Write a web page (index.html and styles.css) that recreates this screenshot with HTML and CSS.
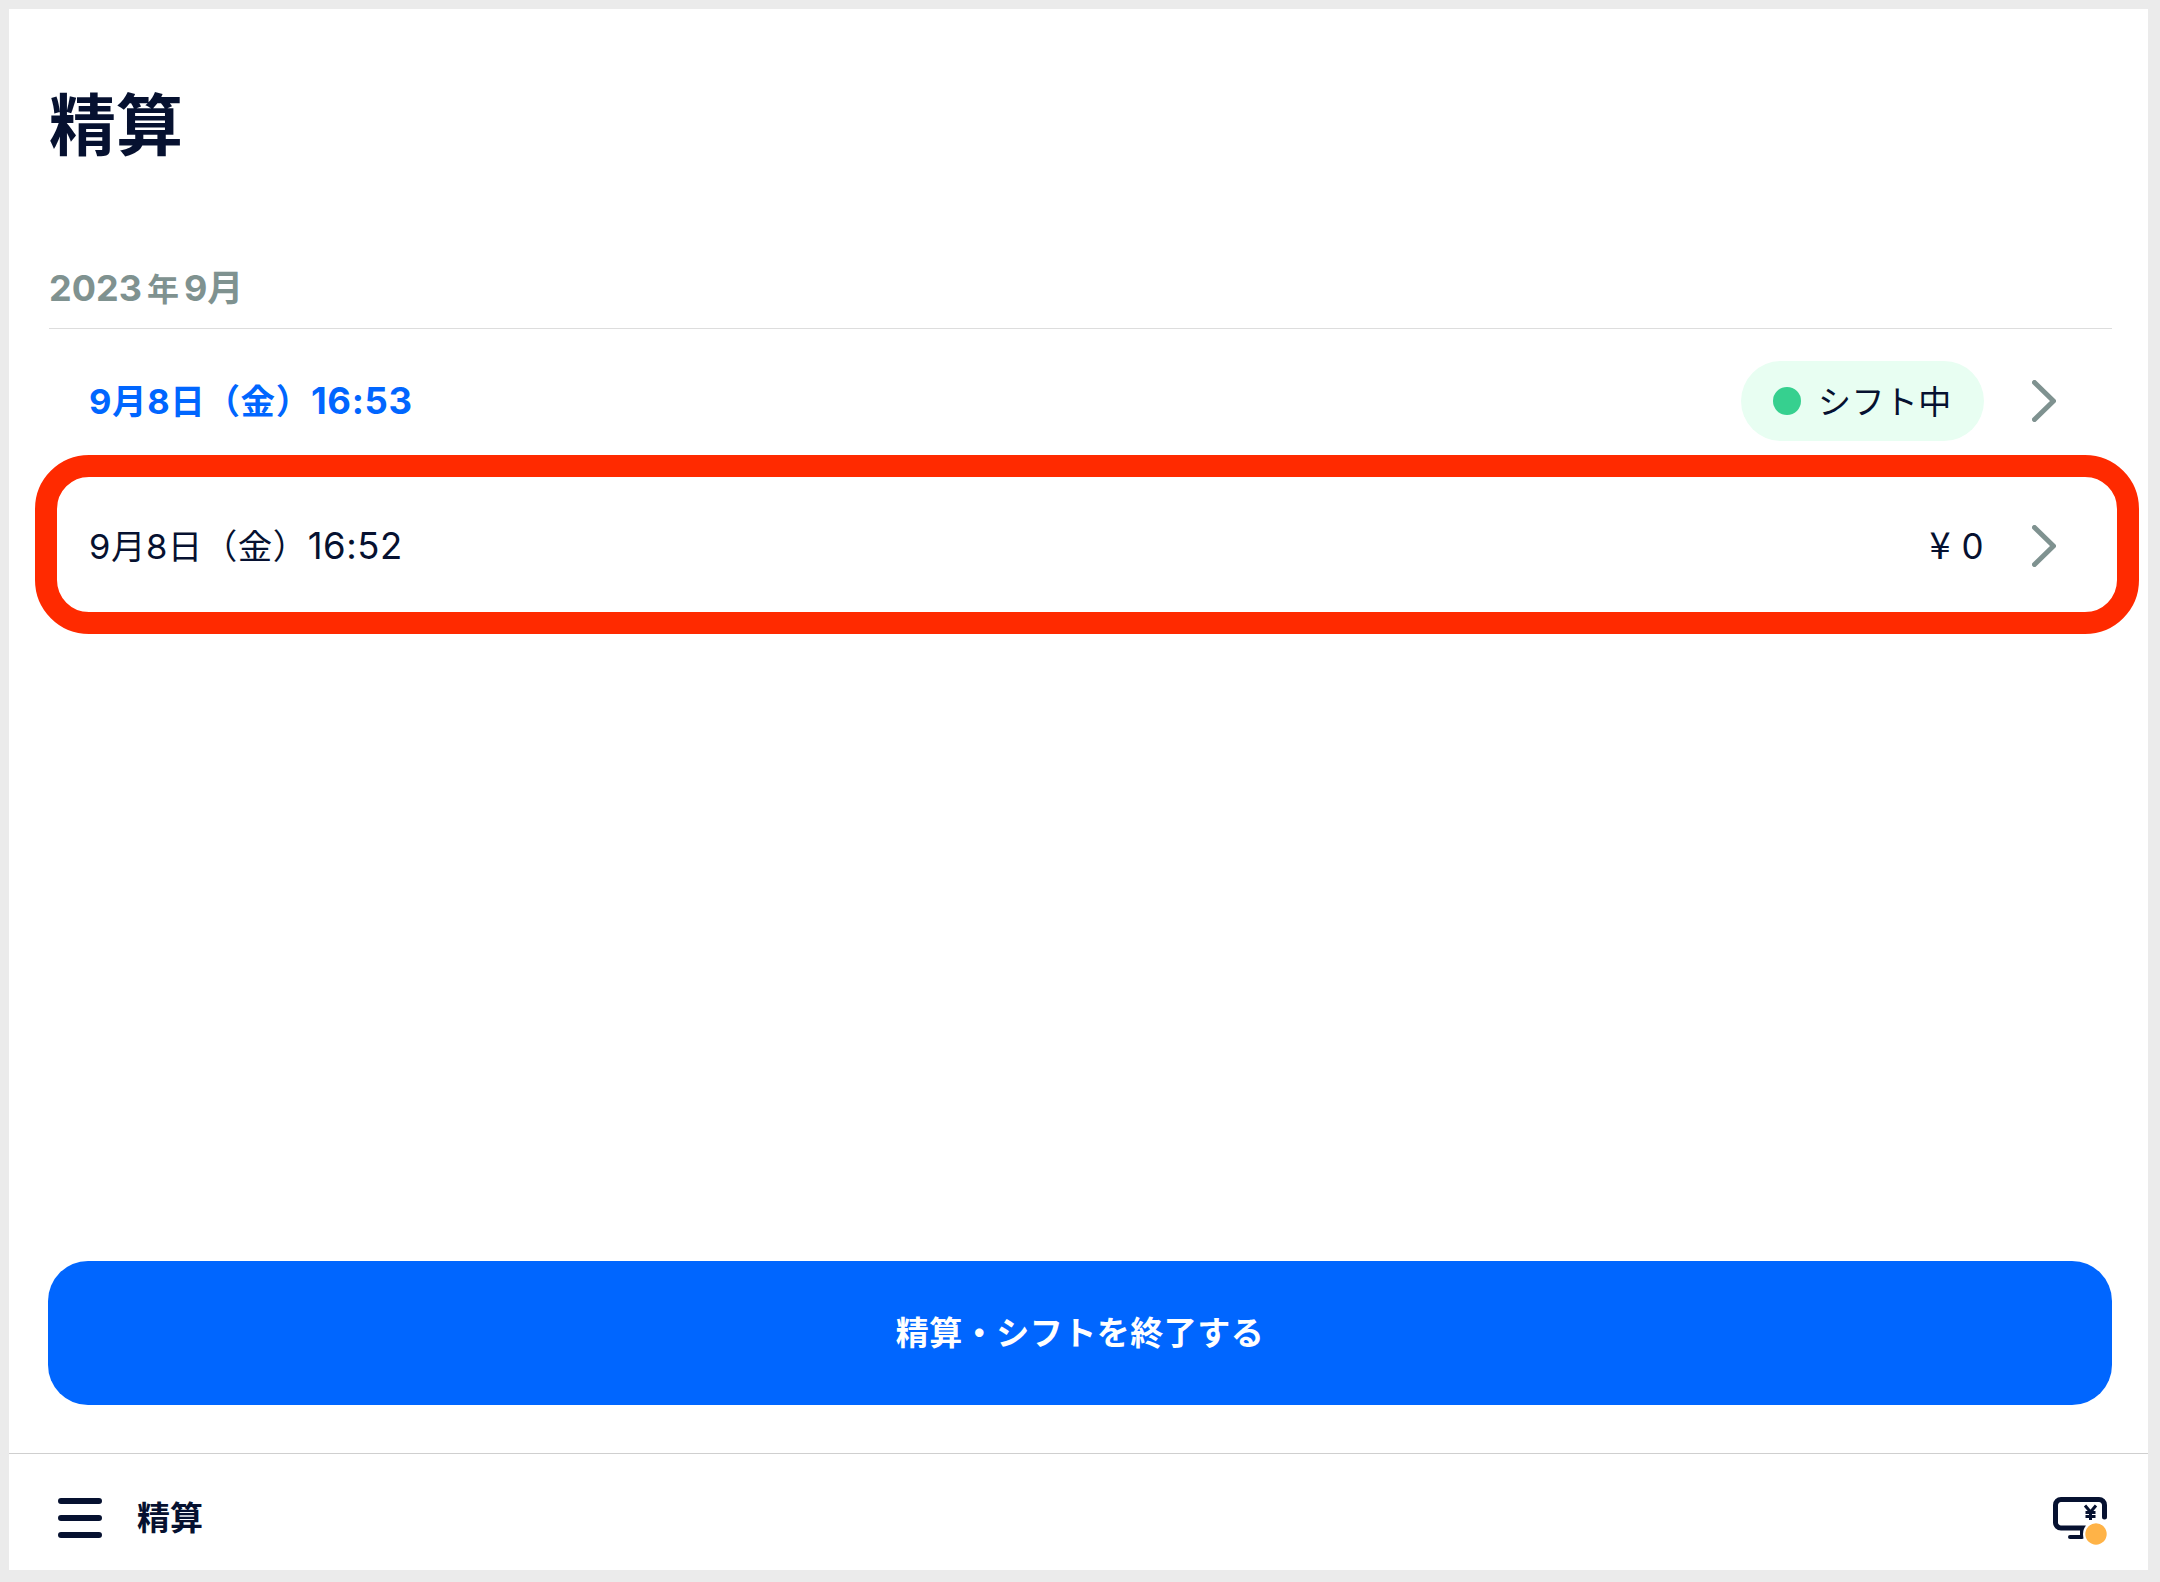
FILE: index.html
```html
<!DOCTYPE html>
<html lang="ja">
<head>
<meta charset="utf-8">
<title>精算</title>
<link rel="stylesheet" href="styles.css">
</head>
<body>
<div class="app">
  <main class="main">
    <h1 class="title">精算</h1>
    <h2 class="month">2023<span class="cjk-gap">年</span>9月</h2>
    <ul class="list">
      <li class="row row-active">
        <span class="row-date">9月8日（金）<span class="time">16:53</span></span>
        <span class="pill"><span class="dot"></span><span class="pill-text">シフト中</span></span>
        <svg class="chevron" viewBox="0 0 24 42"><path d="M2.5 2.5 L21.5 21 L2.5 39.5"/></svg>
      </li>
      <li class="row">
        <span class="row-date">9月8日（金）<span class="time">16:52</span></span>
        <span class="amount"><span class="yen-mark">¥</span> 0</span>
        <svg class="chevron" viewBox="0 0 24 42"><path d="M2.5 2.5 L21.5 21 L2.5 39.5"/></svg>
        <span class="highlight"></span>
      </li>
    </ul>
    <button class="end-button">精算・シフトを終了する</button>
  </main>
  <footer class="footer">
    <svg class="menu-icon" viewBox="0 0 44 40"><path d="M3 3H41M3 20H41M3 37H41"/></svg>
    <span class="footer-title">精算</span>
    <svg class="register-icon" viewBox="0 0 54 48">
      <path class="stroke" d="M32 31H8a5.500 5.500 0 0 1-5.500-5.500V8A5.500 5.500 0 0 1 8 2.500H46A5.500 5.500 0 0 1 51.500 8V20"/>
      <path class="stroke thin" d="M29 40H17M29 31V40"/>
      <path class="stroke yen" d="M32 8.500L37.500 15L43 8.500M37.500 15V23M32.500 15.500H42.500M32.500 19.500H42.500"/>
      <circle class="badge-ring" cx="43" cy="37" r="13"/>
      <circle class="badge" cx="43" cy="37" r="10.700"/>
    </svg>
  </footer>
</div>
</body>
</html>
```
FILE: styles.css
```css
* { box-sizing: border-box; }
html, body { margin: 0; height: 100%; }
body {
  background: #ebebeb;
  font-family: Inter, "Noto Sans CJK JP", sans-serif;
  color: #061130;
}
.app {
  height: 1582px;
  padding: 9px 12px 12px 9px;
  display: flex;
  flex-direction: column;
}
.main {
  flex: 1;
  background: #fff;
  padding: 0 36px 48px 39px;
  display: flex;
  flex-direction: column;
}
.title {
  margin: 77px 0 0 1px;
  font-size: 67px;
  line-height: 80px;
  font-weight: 700;
}
.month {
  margin: 97px 0 0 1px;
  height: 66px;
  font-size: 36px;
  line-height: 50px;
  font-weight: 700;
  color: #7f9290;
  border-bottom: 1px solid #dddddd;
}
.cjk-gap { margin: 0 5px; font-size: 32px; }
.list {
  list-style: none;
  margin: 0;
  padding: 0;
  flex: 1;
}
.row {
  position: relative;
  height: 146px;
  padding: 0 56px 0 41px;
  display: flex;
  align-items: center;
  font-size: 35px;
  letter-spacing: 0.5px;
}
.row-date { flex: 1; padding-bottom: 4px; font-size: 34.5px; }
.time { font-size: 36.5px; }
.row-active { height: 144px; color: #0066ff; font-weight: 700; letter-spacing: 0.65px; }
.pill {
  height: 80px;
  width: 243px;
  border-radius: 40px;
  background: #e8fef2;
  display: flex;
  align-items: center;
  padding-left: 32px;
  gap: 17px;
  color: #061130;
  font-weight: 400;
}
.dot { width: 28px; height: 28px; border-radius: 50%; background: #36d08f; }
.pill-text { font-size: 33px; letter-spacing: 0.4px; padding-bottom: 3px; }
.chevron { width: 24px; height: 42px; margin-left: 48px; }
.chevron path { fill: none; stroke: #7f9290; stroke-width: 5; stroke-linecap: round; stroke-linejoin: round; }
.amount { white-space: pre; padding-bottom: 2px; }
.yen-mark { font-family: "Noto Sans CJK JP", sans-serif; font-size: 38px; line-height: 1; }
.highlight {
  position: absolute;
  left: -13px;
  right: -27px;
  top: -18px;
  bottom: -15px;
  border: 22px solid #ff2a00;
  border-radius: 54px;
}
.end-button {
  height: 144px;
  padding-bottom: 5px;
  border: 0;
  border-radius: 40px;
  background: #0066ff;
  color: #fff;
  font: 700 33px Inter, "Noto Sans CJK JP", sans-serif;
  letter-spacing: 0.5px;
}
.footer {
  height: 117px;
  background: #fff;
  border-top: 1px solid #cfcfcf;
  display: flex;
  align-items: center;
  padding: 11px 41px 0 49px;
}
.menu-icon { width: 44px; height: 40px; }
.menu-icon path { fill: none; stroke: #061130; stroke-width: 6; stroke-linecap: round; }
.footer-title { margin-left: 35px; padding-bottom: 3px; font-size: 33px; font-weight: 700; flex: 1; }
.register-icon { width: 54px; height: 48px; margin-top: 7px; }
.stroke { fill: none; stroke: #061130; stroke-width: 5; stroke-linecap: round; stroke-linejoin: round; }
.thin { stroke-width: 4; }
.yen { stroke-width: 3; stroke-linecap: butt; }
.badge-ring { fill: #fff; }
.badge { fill: #ffb347; }
```
